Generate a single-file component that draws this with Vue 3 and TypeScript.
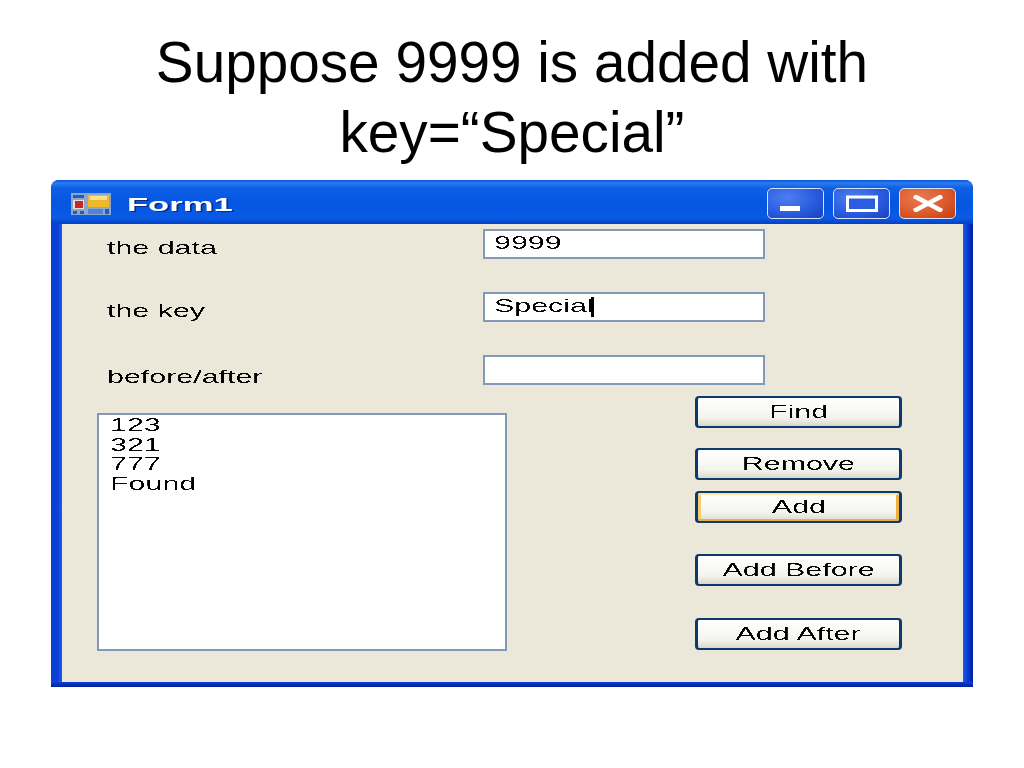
<script setup lang="ts">
const rows = [
  { label: 'the data', value: '9999', caret: false },
  { label: 'the key', value: 'Special', caret: true },
  { label: 'before/after', value: '', caret: false },
]
const items = ['123', '321', '777', 'Found']
const buttons = [
  { text: 'Find', cls: 'b-find' },
  { text: 'Remove', cls: 'b-remove' },
  { text: 'Add', cls: 'b-add' },
  { text: 'Add Before', cls: 'b-before' },
  { text: 'Add After', cls: 'b-after' },
]
</script>

<template>
  <main class="slide">
    <svg class="defs" width="0" height="0">
      <filter id="alias" x="0" y="0" width="100%" height="100%" color-interpolation-filters="sRGB">
        <feComponentTransfer>
          <feFuncA type="discrete" tableValues="0 0 0.85 1" />
        </feComponentTransfer>
      </filter>
    </svg>
    <h1 class="title">Suppose 9999 is added with<br />key=“Special”</h1>
    <section class="window">
      <header class="titlebar">
        <svg class="appicon" width="40" height="22" viewBox="0 0 40 22">
          <rect width="40" height="22" fill="#8fa6c8" />
          <rect x="2" y="2" width="11" height="3" fill="#1c5bd0" />
          <rect x="2" y="7" width="11" height="9" fill="#e8e0d0" />
          <rect x="4" y="8" width="8" height="7" fill="#c8262c" />
          <rect x="17" y="2" width="21" height="12" fill="#f0b92a" />
          <rect x="19" y="3" width="17" height="4" fill="#fbe08a" />
          <rect x="2" y="18" width="4" height="3" fill="#1c5bd0" />
          <rect x="9" y="18" width="4" height="3" fill="#1c5bd0" />
          <rect x="17" y="16" width="15" height="5" fill="#4f82d8" />
          <rect x="34" y="16" width="4" height="5" fill="#1c5bd0" />
        </svg>
        <span class="wintitle">Form1</span>
        <div class="controls">
          <button class="ctl">
            <svg class="min-glyph" width="20" height="5" viewBox="0 0 20 5"><rect width="20" height="5" fill="#fff" /></svg>
          </button>
          <button class="ctl">
            <svg width="32" height="17" viewBox="0 0 32 17"><rect x="1.5" y="2" width="29" height="13.5" fill="#2c5ce0" stroke="#fff" stroke-width="3" /></svg>
          </button>
          <button class="ctl close">
            <svg width="32" height="17" viewBox="0 0 32 17"><path d="M2 1 30 16M30 1 2 16" stroke="#fff" stroke-width="4.5" fill="none" /></svg>
          </button>
        </div>
      </header>
      <div class="client">
        <div class="fields">
          <div v-for="r in rows" :key="r.label" class="field">
            <label class="lbl"><span class="wide">{{ r.label }}</span></label>
            <div class="input">
              <span class="wide val">{{ r.value }}</span>
              <i v-if="r.caret" class="caret"></i>
            </div>
          </div>
        </div>
        <div class="lower">
          <div class="listbox">
            <div v-for="i in items" :key="i" class="item"><span class="wide">{{ i }}</span></div>
          </div>
          <div class="buttons">
            <button v-for="b in buttons" :key="b.text" class="btn" :class="b.cls">
              <span class="wide mid">{{ b.text }}</span>
            </button>
          </div>
        </div>
      </div>
    </section>
  </main>
</template>

<style>
html, body { margin: 0; background: #fff; }
</style>

<style scoped>
.defs { display: block; height: 0; }
.slide {
  width: 1024px;
  height: 768px;
  overflow: hidden;
  background: #fff;
  font-family: "Liberation Sans", Arial, sans-serif;
}
.title {
  margin: 0;
  padding-top: 28px;
  height: 180px;
  box-sizing: border-box;
  text-align: center;
  font-weight: 400;
  font-size: 56.7px;
  line-height: 70px;
  color: #000;
}
.window {
  margin-left: 51px;
  width: 922px;
  height: 507px;
  box-sizing: border-box;
  border-radius: 8px 8px 0 0;
  background: linear-gradient(90deg, #0a3fd6 0, #0a3fd6 6px, #1b5cf0 11px, #1b5cf0 912px, #0a3fd6 916px, #00209c 922px);
  padding: 0 10px 5px 11px;
  display: flex;
  flex-direction: column;
  position: relative;
}
.window::after {
  content: "";
  position: absolute;
  left: 0;
  right: 0;
  bottom: 0;
  height: 5px;
  background: linear-gradient(180deg, #0a3fd6, #00209c);
}
.titlebar {
  height: 44px;
  margin: 0 -10px 0 -11px;
  padding: 0 17px 0 20px;
  box-sizing: border-box;
  border-radius: 8px 8px 0 0;
  background: linear-gradient(180deg, #0a52d8 0, #2a7cf0 3px, #0f5fe6 8px, #0455e0 24px, #0a5ae6 38px, #0340c4 44px);
  display: flex;
  align-items: center;
}
.appicon { margin-right: 16px; margin-top: 3px; }
.wintitle {
  display: inline-block;
  color: #fff;
  font-weight: 700;
  font-size: 19px;
  transform: scaleX(1.82);
  transform-origin: left center;
  text-shadow: 1px 1px 0 #0a2a8c;
  margin-top: 5px;
}
.controls {
  margin-left: auto;
  display: flex;
  gap: 9px;
  margin-top: 3px;
}
.ctl {
  width: 57px;
  height: 31px;
  padding: 0;
  box-sizing: border-box;
  border: 1.5px solid #d8e4fb;
  border-radius: 5px;
  background: radial-gradient(ellipse at 35% 30%, #4f7ef0 0, #2a5ce0 55%, #1a3fc0 100%);
  display: flex;
  align-items: center;
  justify-content: center;
}
.min-glyph { margin: 10px 11px 0 0; }
.close {
  background: radial-gradient(ellipse at 35% 30%, #ea7a52 0, #dc5a2c 55%, #c23c12 100%);
}
.client {
  flex: 1;
  background: #ebe8d9;
  padding-top: 5px;
  box-sizing: border-box;
}
.wide {
  display: inline-block;
  transform: scaleX(1.6);
  transform-origin: left center;
  white-space: nowrap;
  color: #000;
  font-size: 19px;
  filter: url(#alias);
}
.mid { transform-origin: center center; }
.fields {
  display: flex;
  flex-direction: column;
  gap: 34px;
}
.field {
  display: grid;
  grid-template-columns: 421px 282px;
  height: 29px;
}
.lbl {
  padding-left: 45px;
  padding-top: 6px;
  line-height: 26px;
  height: 26px;
}
.field:last-child .lbl { padding-top: 9px; }
.input {
  height: 30px;
  box-sizing: border-box;
  background: #fff;
  border: 2px solid #8299b8;
  padding: 1px 0 0 9px;
  line-height: 22px;
  display: flex;
  align-items: flex-start;
  position: relative;
}
.caret {
  position: absolute;
  left: 106px;
  top: 3px;
  width: 3px;
  height: 20px;
  background: #000;
}
.lower {
  display: flex;
  padding-left: 35px;
  margin-top: 12px;
}
.listbox {
  width: 410px;
  height: 238px;
  margin-top: 17px;
  box-sizing: border-box;
  background: #fff;
  border: 2px solid #8299b8;
  padding: 0 0 0 11px;
}
.item { height: 19.7px; line-height: 19.7px; }
.buttons {
  margin-left: 188px;
  width: 207px;
  display: flex;
  flex-direction: column;
}
.btn {
  height: 32px;
  padding: 0;
  box-sizing: border-box;
  border-style: solid;
  border-color: #0d3a6e;
  border-width: 2px 3px;
  border-radius: 4px;
  background: linear-gradient(180deg, #fff 0, #f4f4ee 70%, #dcd8ca 100%);
  font-family: inherit;
  display: flex;
  align-items: center;
  justify-content: center;
}
.b-remove { margin-top: 20px; }
.b-add {
  margin-top: 11px;
  box-shadow: inset 0 2px 0 #fbe3a8, inset 0 -2px 0 #f0b040, inset 3px 0 0 #f8cc70, inset -3px 0 0 #f0b040;
}
.b-before { margin-top: 31px; }
.b-after { margin-top: 32px; }
</style>
